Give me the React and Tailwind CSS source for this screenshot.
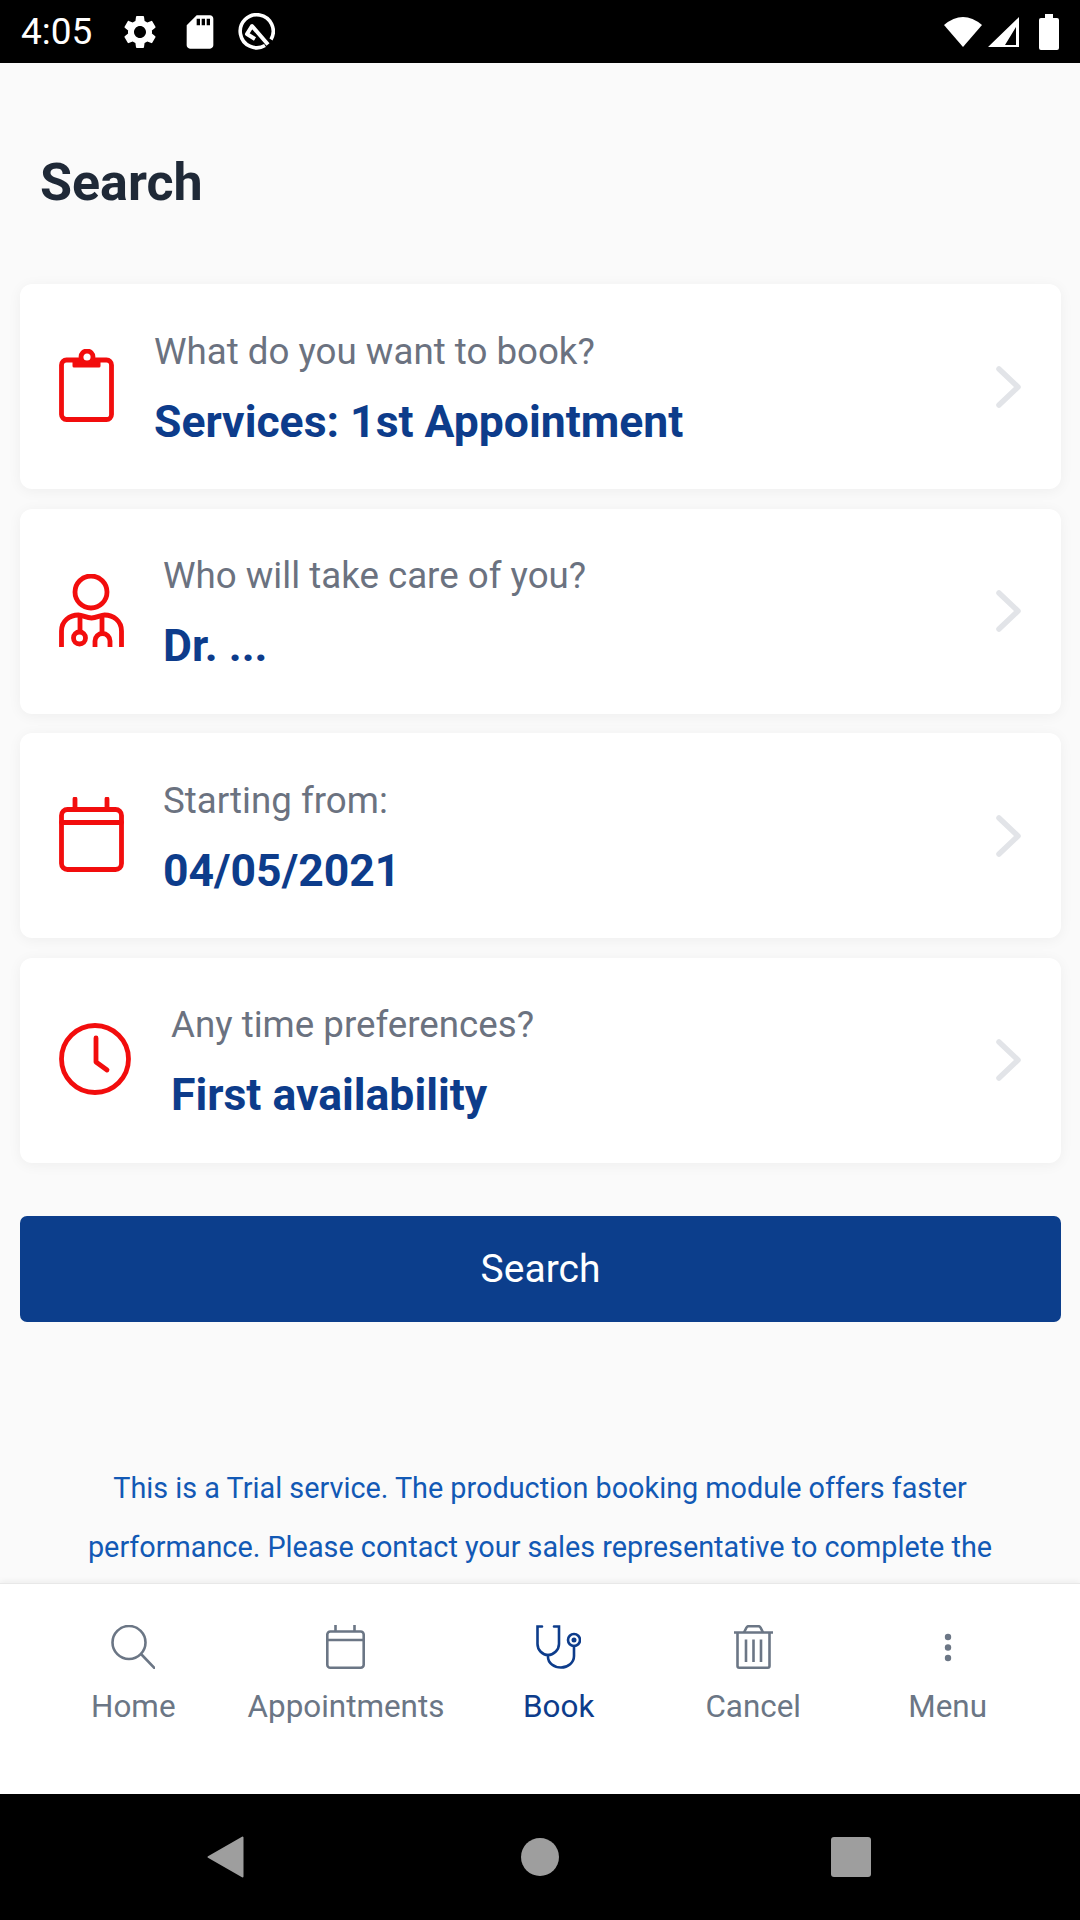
import { MdSettings, MdSdStorage } from "react-icons/md";

const roboto = { fontFamily: "Roboto, sans-serif" };

function ClipboardIcon() {
    return (
        <svg width="55" height="73" viewBox="0 0 55 73" fill="none" stroke="#f20d0d" strokeWidth="4.8" strokeLinejoin="round">
            <rect x="2.5" y="11" width="50" height="59.5" rx="5" />
            <path d="M15 11h25v6H15z" fill="#f20d0d" strokeWidth="3" />
            <circle cx="28" cy="8" r="6" fill="#fff" />
        </svg>
    );
}

function DoctorIcon() {
    return (
        <svg width="65" height="73" viewBox="0 0 65 73" fill="none" stroke="#f20d0d" strokeWidth="4.8" className="-mr-px">
            <circle cx="32" cy="18" r="16" />
            <path d="M2.5 73V57c0-10 8-16 17-16 4 0 8 3 13 3s9-3 13-3c9 0 17 6 17 16v16" />
            <path d="M21 42v16M43 42v16" />
            <circle cx="20.5" cy="64" r="6" />
            <path d="M36 73v-6a7.5 7.5 0 0 1 15 0v6" />
        </svg>
    );
}

function CalendarIcon() {
    return (
        <svg width="65" height="75" viewBox="0 0 65 75" fill="none" stroke="#f20d0d" strokeWidth="4.8" strokeLinecap="round" className="-mr-px">
            <rect x="2.5" y="12.5" width="60" height="60" rx="6" />
            <path d="M2.5 25.5h60M16 2v10M48 2v10" />
        </svg>
    );
}

function ClockIcon() {
    return (
        <svg width="72" height="72" viewBox="0 0 72 72" fill="none" stroke="#f20d0d" strokeWidth="4.8" strokeLinecap="round" strokeLinejoin="round">
            <circle cx="36" cy="36" r="33.5" />
            <path d="M37 15v24l11 8" />
        </svg>
    );
}

function Chevron() {
    return (
        <svg width="26" height="42" viewBox="0 0 26 42" fill="none" stroke="#e2e4e8" strokeWidth="5.5" strokeLinecap="round" strokeLinejoin="round">
            <path d="M3 3l19 18L3 39" />
        </svg>
    );
}

function SearchIcon() {
    return (
        <svg width="44" height="44" viewBox="0 0 44 44" fill="none" stroke="currentColor" strokeWidth="2.6" strokeLinecap="round">
            <circle cx="18" cy="17.5" r="16.5" />
            <path d="M30.5 29.5L43.5 43" />
        </svg>
    );
}

function NavCalendarIcon() {
    return (
        <svg width="39" height="44" viewBox="0 0 39 44" fill="none" stroke="currentColor" strokeWidth="2.6">
            <rect x="1.3" y="6.5" width="36.4" height="36.2" rx="3" />
            <path d="M1.3 15h36.4M9.5 0v6.5M28.5 0v6.5" />
        </svg>
    );
}

function StethoscopeIcon() {
    return (
        <svg width="45" height="44" viewBox="0 0 45 44" fill="none" stroke="currentColor" strokeWidth="2.6" strokeLinecap="round">
            <path d="M6 1.5H1.5V19c0 6 5 11 10.5 11s11-5 11-11V1.5h-5" />
            <path d="M12 30v2c0 6 6 10.5 13 10.5s13-5 13-11.5V21" />
            <circle cx="38" cy="15" r="6" />
            <circle cx="38" cy="15" r="1.2" fill="currentColor" />
        </svg>
    );
}

function TrashIcon() {
    return (
        <svg width="39" height="44" viewBox="0 0 39 44" fill="none" stroke="currentColor" strokeWidth="2.6" strokeLinejoin="round">
            <path d="M0 7.5h39M3.5 7.5V41q0 1.7 1.7 1.7h28.6q1.7 0 1.7-1.7V7.5" />
            <path d="M10 7.5l2.5-5q.7-1.3 2-1.3h10q1.3 0 2 1.3l2.5 5" />
            <path d="M12 14.5v22.5M19.5 14.5v22.5M27 14.5v22.5" />
        </svg>
    );
}

function DotsIcon() {
    return (
        <svg width="8" height="44" viewBox="0 0 8 44" fill="currentColor">
            <circle cx="4" cy="12" r="3.2" />
            <circle cx="4" cy="22.5" r="3.2" />
            <circle cx="4" cy="33" r="3.2" />
        </svg>
    );
}

function QIcon() {
    return (
        <svg width="37" height="37" viewBox="0 0 37 37" fill="none" stroke="#fff" strokeWidth="3.6">
            <path d="M27 32.5A16.5 16.5 0 1 1 33 26.5" />
            <path d="M30 31.5L14 13 9 21l8 5" strokeWidth="4" strokeLinejoin="round" />
        </svg>
    );
}

const rows = [
    { icon: <ClipboardIcon />, label: "What do you want to book?", value: "Services: 1st Appointment" },
    { icon: <DoctorIcon />, label: "Who will take care of you?", value: "Dr. ..." },
    { icon: <CalendarIcon />, label: "Starting from:", value: "04/05/2021" },
    { icon: <ClockIcon />, label: "Any time preferences?", value: "First availability" },
];

const tabs = [
    { icon: <SearchIcon />, label: "Home" },
    { icon: <NavCalendarIcon />, label: "Appointments" },
    { icon: <StethoscopeIcon />, label: "Book", active: true },
    { icon: <TrashIcon />, label: "Cancel" },
    { icon: <DotsIcon />, label: "Menu" },
];

export default function App() {
    return (
        <div className="w-[1080px] h-[1920px] flex flex-col bg-[#fafafa] overflow-hidden" style={roboto}>
            {/* status bar */}
            <div className="h-[63px] bg-black flex items-center pl-[21px] pr-[21px] text-white shrink-0">
                <span className="text-[37px] leading-none w-[84px]">4:05</span>
                <MdSettings size={40} className="ml-[15px]" />
                <MdSdStorage size={40} className="ml-[20px]" />
                <span className="ml-[18px] flex"><QIcon /></span>
                <div className="ml-auto flex items-center">
                    <svg width="38" height="31" viewBox="0 0 38 31" fill="#fff">
                        <path d="M0 9Q19-7 38 9L19 31z" />
                    </svg>
                    <svg width="33" height="32" viewBox="0 0 33 32" fill="none" className="ml-[5px]">
                        <path d="M32 1v30H1z M29 11v18h-11z" fill="#fff" fillRule="evenodd" />
                    </svg>
                    <svg width="20" height="36" viewBox="0 0 20 36" fill="#fff" className="ml-[19px]">
                        <path d="M6 0h8v4h4q2 0 2 2v28q0 2-2 2H2q-2 0-2-2V6q0-2 2-2h4z" />
                    </svg>
                </div>
            </div>

            {/* content */}
            <div className="flex-1 overflow-hidden">
                <h1 className="mt-[92px] pl-[40px] text-[52px] leading-[56px] font-bold text-[#1f2937]">Search</h1>
                <div className="mt-[73px] ml-[20px] mr-[19px] flex flex-col gap-[19.5px]">
                    {rows.map((row) => (
                        <div key={row.label} className="h-[205px] bg-white rounded-[12px] shadow-[0_2px_14px_rgba(0,0,0,0.05)] flex items-center pl-[39px] pr-[39px]">
                            <div className="shrink-0 flex -mt-[2px]">{row.icon}</div>
                            <div className="ml-[40px] flex-1">
                                <div className="text-[36.7px] leading-[44px] text-[#6b7280]">{row.label}</div>
                                <div className="mt-[26px] text-[44.5px] leading-[44px] font-bold text-[#0d3c8b]">{row.value}</div>
                            </div>
                            <Chevron />
                        </div>
                    ))}
                </div>
                <button className="mt-[53px] mx-[20px] w-[1041px] h-[106px] pt-px rounded-[7px] bg-[#0c3e8c] text-white text-[39px]">Search</button>
                <p className="mt-[137px] px-[80px] text-center text-[28.8px] leading-[59px] text-[#1259b5]">
                    This is a Trial service. The production booking module offers faster performance. Please contact your sales representative to complete the
                </p>
            </div>

            {/* tab bar */}
            <div className="relative h-[211px] bg-white border-t border-[#e8e8e8] shadow-[0_-2px_6px_rgba(0,0,0,0.05)] shrink-0 flex justify-center items-start pt-[41px] pl-[1px]">
                {tabs.map((tab) => (
                    <div key={tab.label} className={`min-w-[194.5px] px-[17px] flex flex-col items-center ${tab.active ? "text-[#0d3c8b]" : "text-[#6b7685]"}`}>
                        <div className="h-[44px] flex">{tab.icon}</div>
                        <div className="mt-[20px] text-[31.4px] leading-[36px]">{tab.label}</div>
                    </div>
                ))}
            </div>

            {/* android nav */}
            <div className="h-[126px] bg-black shrink-0 flex items-center justify-center pr-[2px]">
                <svg width="37" height="42" viewBox="0 0 37 42" fill="#9e9e9e" stroke="#9e9e9e" strokeWidth="2" strokeLinejoin="round">
                    <path d="M35.5 1.5v39L1.5 21z" />
                </svg>
                <div className="ml-[277px] w-[38px] h-[38px] rounded-full bg-[#9e9e9e]" />
                <div className="ml-[272px] w-[40px] h-[40px] rounded-[3px] bg-[#9e9e9e]" />
            </div>
        </div>
    );
}
